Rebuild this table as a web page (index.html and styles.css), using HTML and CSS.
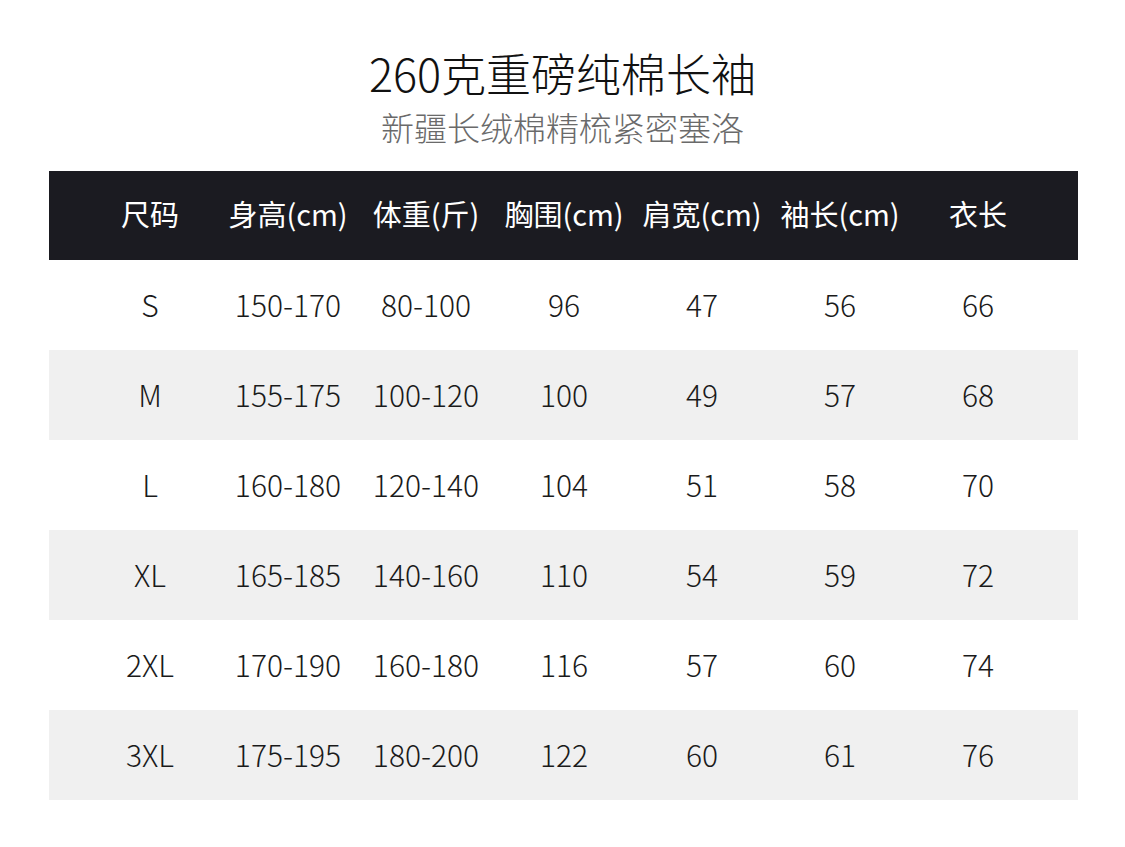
FILE: index.html
```html
<!DOCTYPE html>
<html lang="zh-CN">
<head>
<meta charset="utf-8">
<title>260克重磅纯棉长袖</title>
<link rel="stylesheet" href="styles.css">
</head>
<body>
<div class="page">
  <header class="head">
    <h1 class="title">260克重磅纯棉长袖</h1>
    <p class="subtitle">新疆长绒棉精梳紧密塞洛</p>
  </header>
  <div class="table">
    <div class="row row-head">
      <span>尺码</span><span>身高(cm)</span><span>体重(斤)</span><span>胸围(cm)</span><span>肩宽(cm)</span><span>袖长(cm)</span><span>衣长</span>
    </div>
    <div class="row">
      <span>S</span><span>150-170</span><span>80-100</span><span>96</span><span>47</span><span>56</span><span>66</span>
    </div>
    <div class="row row-alt">
      <span>M</span><span>155-175</span><span>100-120</span><span>100</span><span>49</span><span>57</span><span>68</span>
    </div>
    <div class="row">
      <span>L</span><span>160-180</span><span>120-140</span><span>104</span><span>51</span><span>58</span><span>70</span>
    </div>
    <div class="row row-alt">
      <span>XL</span><span>165-185</span><span>140-160</span><span>110</span><span>54</span><span>59</span><span>72</span>
    </div>
    <div class="row">
      <span>2XL</span><span>170-190</span><span>160-180</span><span>116</span><span>57</span><span>60</span><span>74</span>
    </div>
    <div class="row row-alt">
      <span>3XL</span><span>175-195</span><span>180-200</span><span>122</span><span>60</span><span>61</span><span>76</span>
    </div>
  </div>
</div>
</body>
</html>
```

FILE: styles.css
```css
html, body {
  margin: 0;
  padding: 0;
  background: #ffffff;
}

body {
  font-family: "Noto Sans CJK SC", "Noto Sans", sans-serif;
  color: #222222;
}

.page {
  width: 1125px;
  height: 847px;
  padding-top: 44px;
  box-sizing: border-box;
}

.head {
  display: flex;
  flex-direction: column;
  align-items: center;
}

.title {
  margin: 0;
  font-size: 45px;
  font-weight: 300;
  line-height: 58px;
  color: #111111;
}

.subtitle {
  margin: 0;
  padding-top: 5px;
  font-size: 33px;
  font-weight: 300;
  line-height: 40px;
  color: #6a6a6a;
}

.table {
  margin: 24px 0 0 49px;
  width: 1029px;
}

.row {
  display: grid;
  grid-template-columns: repeat(7, 138px);
  padding: 0 31px 3px 32px;
  height: 90px;
  box-sizing: border-box;
  align-items: center;
  font-size: 30px;
  font-weight: 300;
  color: #1a1a1a;
}

.row span {
  text-align: center;
  white-space: nowrap;
}

.row-head {
  height: 89px;
  padding-bottom: 6px;
  font-size: 29px;
  font-weight: 400;
  background: #1b1b21;
  color: #ffffff;
}

.row-alt {
  background: #f0f0f0;
}
```
